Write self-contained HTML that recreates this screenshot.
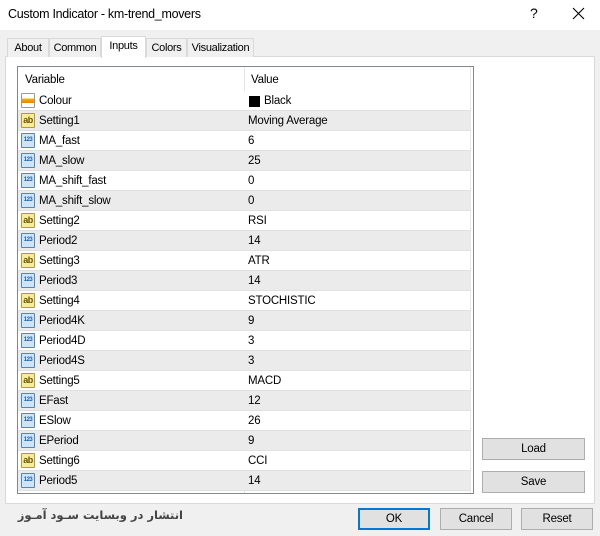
<!DOCTYPE html><html><head><style>
body{margin:0;width:600px;height:536px;background:#f0f0f0;font-family:"Liberation Sans",sans-serif;font-size:11.5px;letter-spacing:-0.2px;color:#000;position:relative;overflow:hidden}
.a{position:absolute}
.tab{position:absolute;top:38px;height:19px;background:#f0f0f0;border:1px solid #d9d9d9;border-bottom:none;box-sizing:border-box;text-align:center;line-height:18px;font-size:11px;letter-spacing:-0.3px}
.row{position:absolute;left:18px;width:452px;height:20px;border-bottom:1px solid #e0e0e0;box-sizing:border-box}
.row span{position:absolute;top:4px}
.ic{position:absolute;left:3px;top:2px;width:14px;height:15px;box-sizing:border-box;border-radius:1px;font-size:6px;line-height:13px;text-align:center;font-weight:bold;letter-spacing:-0.5px}
.n{background:#d0e4f7;border:1px solid #4f86c6;color:#1e5fa8}
.s{background:#f7ec9c;border:1px solid #b89a2a;color:#6b5200;font-size:9px}
.btn{position:absolute;height:22px;background:#e1e1e1;border:1px solid #adadad;box-sizing:border-box;text-align:center;line-height:20px}
</style></head><body>
<div class="a" style="left:0;top:0;width:600px;height:30px;background:#fff"></div>
<div class="a" style="left:8px;top:7px;font-size:12.5px;letter-spacing:-0.3px">Custom Indicator - km-trend_movers</div>
<div class="a" style="left:530px;top:5px;font-size:14px">?</div>
<svg class="a" style="left:572px;top:7px" width="13" height="13"><path d="M1 1L12 12M12 1L1 12" stroke="#000" stroke-width="1.1"/></svg>
<div class="a" style="left:5px;top:56px;width:590px;height:448px;background:#fff;border:1px solid #d9d9d9;box-sizing:border-box"></div>
<div class="tab" style="left:7px;width:42px">About</div>
<div class="tab" style="left:49px;width:52px">Common</div>
<div class="tab" style="left:101px;top:36px;height:22px;width:45px;background:#fff;line-height:18px">Inputs</div>
<div class="tab" style="left:146px;width:41px">Colors</div>
<div class="tab" style="left:187px;width:67px">Visualization</div>
<div class="a" style="left:17px;top:66px;width:457px;height:428px;border:1px solid #828790;box-sizing:border-box;background:#fff"></div>
<div class="a" style="left:470px;top:67px;width:1px;height:426px;background:#e8e8e8"></div>
<div class="a" style="left:244px;top:67px;width:1px;height:426px;background:#e5e5e5"></div>
<div class="a" style="left:25px;top:74px">Variable</div>
<div class="a" style="left:251px;top:74px">Value</div>
<div id="rows"></div>
<div class="btn" style="left:482px;top:438px;width:103px">Load</div>
<div class="btn" style="left:482px;top:471px;width:103px">Save</div>
<div class="btn" style="left:358px;top:508px;width:72px;border:2px solid #0078d7;line-height:18px">OK</div>
<div class="btn" style="left:440px;top:508px;width:72px">Cancel</div>
<div class="btn" style="left:521px;top:508px;width:72px">Reset</div>
<div class="a" style="left:18px;top:508px;width:165px;text-align:center;font-size:11.5px;letter-spacing:0;font-weight:bold;color:#444;direction:rtl;font-family:'DejaVu Sans',sans-serif;white-space:nowrap">انتشار در وبسایت سـود آمـوز</div>
<script>
var d=[["c","Colour","Black"],["s","Setting1","Moving Average"],["n","MA_fast","6"],["n","MA_slow","25"],["n","MA_shift_fast","0"],["n","MA_shift_slow","0"],["s","Setting2","RSI"],["n","Period2","14"],["s","Setting3","ATR"],["n","Period3","14"],["s","Setting4","STOCHISTIC"],["n","Period4K","9"],["n","Period4D","3"],["n","Period4S","3"],["s","Setting5","MACD"],["n","EFast","12"],["n","ESlow","26"],["n","EPeriod","9"],["s","Setting6","CCI"],["n","Period5","14"]];
var h="";d.forEach(function(r,i){var ic=r[0]=="n"?'<div class="ic n">123</div>':r[0]=="s"?'<div class="ic s">ab</div>':'<div class="ic" style="background:linear-gradient(#fff 35%,#f5b400 35%,#f08000 70%,#fff 70%);border:1px solid #999"></div>';
var v=r[0]=="c"?'<span style="left:231px;top:5px;width:11px;height:11px;background:#000"></span><span style="left:246px">Black</span>':'<span style="left:230px">'+r[2]+'</span>';
h+='<div class="row" style="top:'+(91+i*20)+'px;background:'+(i%2?'#ebebeb':'#fff')+'">'+ic+'<span style="left:21px">'+r[1]+'</span>'+v+'</div>';});
document.getElementById("rows").innerHTML=h;
</script>
</body></html>
